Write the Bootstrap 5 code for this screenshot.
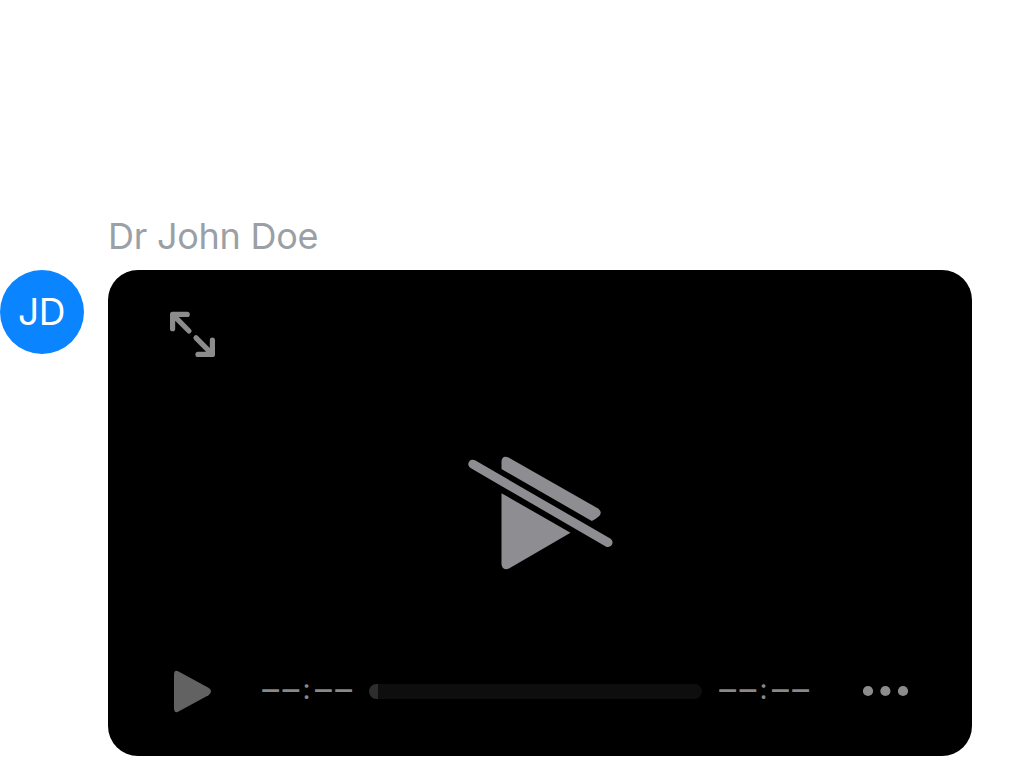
<!DOCTYPE html>
<html lang="en">
<head>
<meta charset="utf-8">
<meta name="viewport" content="width=device-width, initial-scale=1">
<title>Video message</title>
<link href="https://cdn.jsdelivr.net/npm/bootstrap@5.3.0/dist/css/bootstrap.min.css" rel="stylesheet">
<style>
body{background:#fff;font-family:Inter,"Liberation Sans",sans-serif;overflow:hidden}
.message{padding-top:210px;gap:24px}
.avatar{width:84px;height:84px;margin-top:60px;padding-right:1px;background:#0a84ff;font-size:37px;letter-spacing:-.4px;font-weight:400}
.sender{height:60px;line-height:53px;font-size:36px;letter-spacing:-.25px;color:#9aa0a6;white-space:nowrap}
.player{width:864px;height:486px;border-radius:30px;background:#000}
.expand{margin:40px 0 0 60px}
.unavailable{margin:94px 0 0 357px}
.controls{height:50px;margin:92px 63px 0 65px}
.time{width:90px;height:30px;color:#8a888a;font-size:33.5px;line-height:26px}
.time span{width:17px;flex:none;display:flex;justify-content:center}
.time .colon{width:6px;margin:0 2px 0 1px;font-size:28px;line-height:27px}
.track{width:333px;height:15px;border-radius:7.5px;background:#0e0e0e;margin:0 17px 0 17px}
.loaded{width:9px;height:15px;background:#2d2d2d}
</style>
</head>
<body>
<main class="message d-flex align-items-start">
  <div class="avatar rounded-circle d-flex align-items-center justify-content-center text-white flex-shrink-0">JD</div>
  <section>
    <div class="sender">Dr John Doe</div>
    <div class="player overflow-hidden">
      <svg class="expand d-block" width="50" height="50" viewBox="168 310 50 50" fill="none" stroke="#8c8c8c" stroke-width="5.2" stroke-linecap="round" stroke-linejoin="round"><path d="M172.6 328.7V314.4H187.2M172.8 314.6L189 331M212.4 340.2V354.4H198M212.2 354.2L196 337.8"/></svg>
      <svg class="unavailable d-block" width="150" height="120" viewBox="465 454 150 120" fill="#8e8d92"><path d="M501.5 469V461.5Q502 455 508.5 457.5L598.5 508.8Q602.5 512.5 599.3 516Q596 519 591.8 521Z"/><path d="M501.5 493.2L570.5 532.8L509 568.5Q502 571 501.5 564Z"/><path d="M472.8 464.2L608 542.5" stroke="#8e8d92" stroke-width="9" stroke-linecap="round"/></svg>
      <div class="controls d-flex align-items-center">
        <svg class="flex-shrink-0" width="89" height="50" viewBox="173 666 89 50"><path fill="#626262" d="M174 675Q174 669 179 671.7L208.5 687.8Q213.5 691.5 208.5 695.2L179 711.3Q174 714 174 708Z"/></svg>
        <div class="time d-flex justify-content-between flex-shrink-0"><span>–</span><span>–</span><span class="colon">:</span><span>–</span><span>–</span></div>
        <div class="track overflow-hidden flex-shrink-0"><div class="loaded"></div></div>
        <div class="time d-flex justify-content-between flex-shrink-0"><span>–</span><span>–</span><span class="colon">:</span><span>–</span><span>–</span></div>
        <svg class="ms-auto flex-shrink-0" width="46" height="12" viewBox="863 685 46 12" fill="#8c8c8c"><circle cx="868" cy="691" r="5.1"/><circle cx="885.4" cy="691" r="5.1"/><circle cx="903" cy="691" r="5.1"/></svg>
      </div>
    </div>
  </section>
</main>
<script src="https://cdn.jsdelivr.net/npm/bootstrap@5.3.0/dist/js/bootstrap.bundle.min.js"></script>
</body>
</html>
